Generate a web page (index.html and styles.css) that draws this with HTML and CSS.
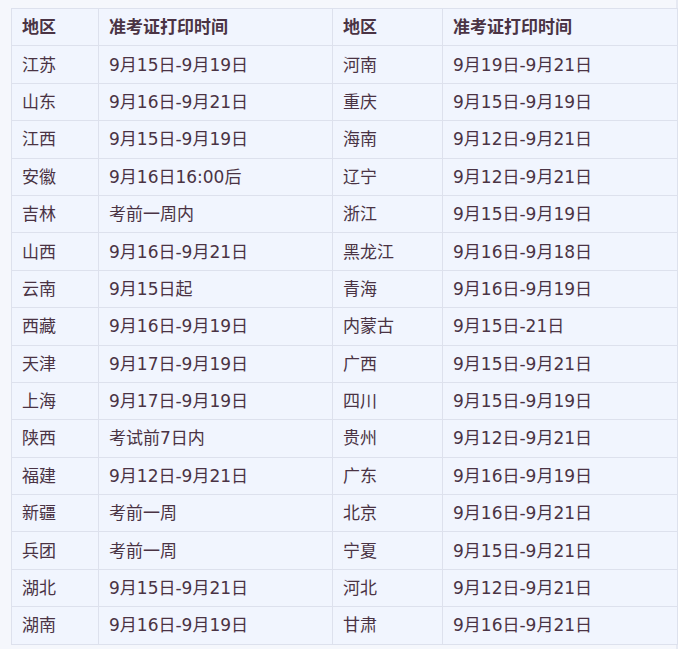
FILE: index.html
```html
<!DOCTYPE html>
<html lang="zh-CN">
<head>
<meta charset="utf-8">
<link rel="stylesheet" href="styles.css">
</head>
<body>
<div class="wrap">
<table class="grid">
<colgroup><col class="c1"><col class="c2"><col class="c3"><col class="c4"></colgroup>
<thead>
<tr><th>地区</th><th>准考证打印时间</th><th>地区</th><th>准考证打印时间</th></tr>
</thead>
<tbody>
<tr><td>江苏</td><td>9月15日-9月19日</td><td>河南</td><td>9月19日-9月21日</td></tr>
<tr><td>山东</td><td>9月16日-9月21日</td><td>重庆</td><td>9月15日-9月19日</td></tr>
<tr><td>江西</td><td>9月15日-9月19日</td><td>海南</td><td>9月12日-9月21日</td></tr>
<tr><td>安徽</td><td>9月16日16:00后</td><td>辽宁</td><td>9月12日-9月21日</td></tr>
<tr><td>吉林</td><td>考前一周内</td><td>浙江</td><td>9月15日-9月19日</td></tr>
<tr><td>山西</td><td>9月16日-9月21日</td><td>黑龙江</td><td>9月16日-9月18日</td></tr>
<tr><td>云南</td><td>9月15日起</td><td>青海</td><td>9月16日-9月19日</td></tr>
<tr><td>西藏</td><td>9月16日-9月19日</td><td>内蒙古</td><td>9月15日-21日</td></tr>
<tr><td>天津</td><td>9月17日-9月19日</td><td>广西</td><td>9月15日-9月21日</td></tr>
<tr><td>上海</td><td>9月17日-9月19日</td><td>四川</td><td>9月15日-9月19日</td></tr>
<tr><td>陕西</td><td>考试前7日内</td><td>贵州</td><td>9月12日-9月21日</td></tr>
<tr><td>福建</td><td>9月12日-9月21日</td><td>广东</td><td>9月16日-9月19日</td></tr>
<tr><td>新疆</td><td>考前一周</td><td>北京</td><td>9月16日-9月21日</td></tr>
<tr><td>兵团</td><td>考前一周</td><td>宁夏</td><td>9月15日-9月21日</td></tr>
<tr><td>湖北</td><td>9月15日-9月21日</td><td>河北</td><td>9月12日-9月21日</td></tr>
<tr><td>湖南</td><td>9月16日-9月19日</td><td>甘肃</td><td>9月16日-9月21日</td></tr>
</tbody>
</table>
</div>
</body>
</html>
```
FILE: styles.css
```css
html, body {
  margin: 0;
  padding: 0;
  background: #f5f7fc;
}
.wrap {
  padding: 8px 0 0 11px;
  border-right: 2px solid #e6e9f2;
  width: 665px;
  height: 641px;
}
.grid {
  border-collapse: collapse;
  table-layout: fixed;
  width: 666px;
  background: #f1f5fe;
  font-family: "DejaVu Sans", "Noto Sans CJK SC", sans-serif;
  font-size: 17px;
  color: #4a3344;
}
.c1 { width: 87px; }
.c2 { width: 234px; }
.c3 { width: 110px; }
.c4 { width: 235px; }
.grid th, .grid td {
  border: 1px solid #dde1ed;
  height: 36.4px;
  padding: 0 10px;
  text-align: left;
  vertical-align: middle;
  white-space: nowrap;
  line-height: 20px;
}
.grid th {
  font-weight: 700;
}
```
